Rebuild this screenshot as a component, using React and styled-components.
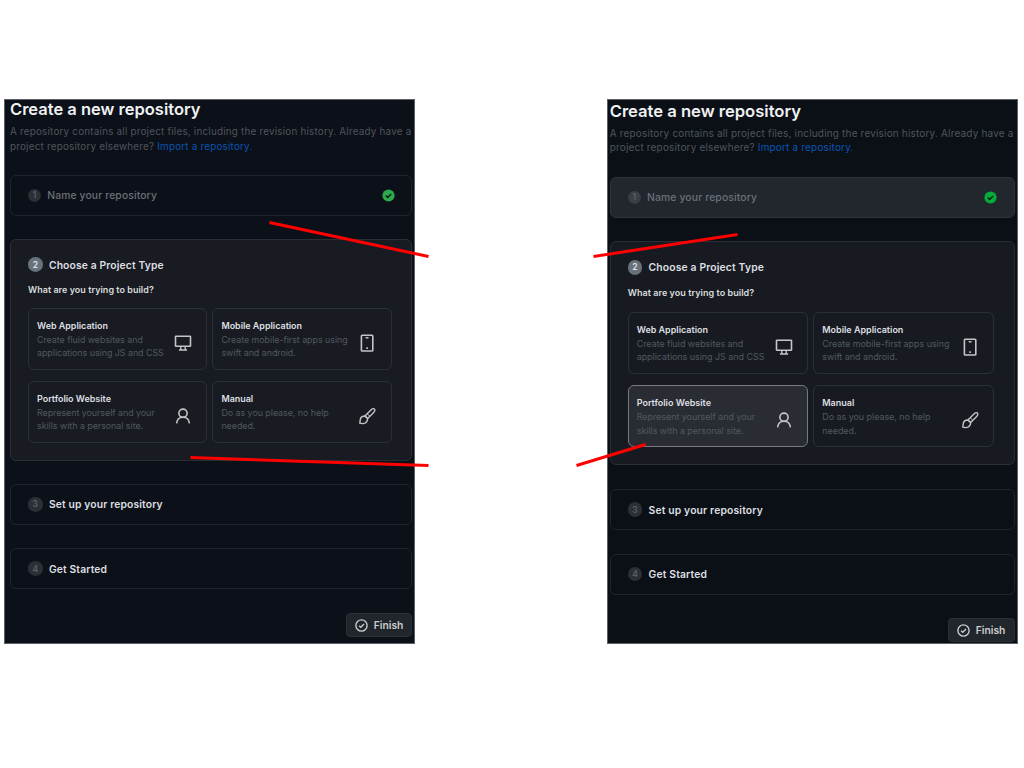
import React from "react";
import styled, { createGlobalStyle, ThemeProvider } from "styled-components";

const GlobalStyle = createGlobalStyle`
  * { box-sizing: border-box; }
  body { margin: 0; background: #fff; }
`;

const leftTheme = {
  bg: "#0c1018", activeBg: "#181b22", edge: "#5d6165",
  line: "#1f232a", activeLine: "#2a2f36", green: "#2bab4b",
  padTop: 1, padRight: 2, padLeft: 5,
  headGap: 21.2, rowHeight: 41, gap: 23.2, stageHeight: 222,
  inner: 17, cardGap: 5, cardRowGap: 11, cardWidth: 179.4, cardHeight: 62,
  titleTop: 17.5, questionTop: 12, cardsTop: 11.8, buttonTop: 24.2, buttonWidth: 66,
  scale: 1, iconRight: 15.5, checkRight: 17,
};

const rightTheme = {
  ...leftTheme,
  bg: "#0b1017", activeBg: "#171b21", green: "#04ad3a",
  padTop: 2.6, padRight: 2.5, padLeft: 1.7,
  headGap: 21.9, stageHeight: 224, gap: 23.6,
  cardWidth: 180.6, cardRowGap: 11.5, titleTop: 17.4, questionTop: 11.8, cardsTop: 13,
  scale: 1.005, iconRight: 15, checkRight: 18, buttonTop: 23.7, buttonWidth: 66.5,
};

const Page = styled.main`
  position: relative;
  width: 1024px;
  height: 768px;
  padding: 99px 6px 0 4px;
  display: flex;
  justify-content: space-between;
  overflow: hidden;
  font-family: Inter, "Liberation Sans", sans-serif;
`;

const Panel = styled.section`
  width: 411px;
  height: 545px;
  background: ${(p) => p.theme.bg};
  border: 1px solid ${(p) => p.theme.edge};
  padding: ${(p) => `${p.theme.padTop}px ${p.theme.padRight}px 0 ${p.theme.padLeft}px`};
  display: flex;
  flex-direction: column;
  overflow: hidden;
`;

const Heading = styled.h1`
  margin: 0;
  font-size: ${(p) => 16.5 * p.theme.scale}px;
  line-height: 17px;
  font-weight: 600;
  color: #f0f1f2;
  white-space: nowrap;
`;

const Intro = styled.p`
  margin: 6px 0 0;
  font-size: ${(p) => 9.9 * p.theme.scale}px;
  line-height: 14.7px;
  letter-spacing: 0.2px;
  color: #4f555d;
  white-space: nowrap;
`;

const Link = styled.a`
  color: #0955b2;
`;

const Steps = styled.div`
  margin-top: ${(p) => p.theme.headGap}px;
  display: flex;
  flex-direction: column;
  gap: ${(p) => p.theme.gap}px;
`;

const Step = styled.div`
  height: ${(p) => p.theme.rowHeight}px;
  border: 1px solid ${(p) => (p.$filled ? "#2f333a" : p.theme.line)};
  border-radius: 6px;
  background: ${(p) => (p.$filled ? "#22262d" : "transparent")};
  padding: 0 ${(p) => p.theme.checkRight - 1}px 0 ${(p) => p.theme.inner}px;
  display: flex;
  align-items: center;
`;

const Stage = styled.div`
  height: ${(p) => p.theme.stageHeight}px;
  border: 1px solid ${(p) => p.theme.activeLine};
  border-radius: 6px;
  background: ${(p) => p.theme.activeBg};
  padding: ${(p) => `${p.theme.titleTop}px 0 0 ${p.theme.inner}px`};
`;

const StepHead = styled.div`
  display: flex;
  align-items: center;
  height: 15px;
`;

const Badge = styled.span`
  flex: none;
  width: ${(p) => (p.$done ? 13 : 14.6)}px;
  height: ${(p) => (p.$done ? 13 : 14.6)}px;
  border-radius: 50%;
  display: flex;
  align-items: center;
  justify-content: center;
  font-size: 8.5px;
  font-weight: 600;
  color: ${(p) => (p.$active ? "#dfe2e5" : "#59616a")};
  background: ${(p) => (p.$active ? "#68717c" : p.$filled ? "#3a3e45" : "#2b2f36")};
`;

const StepLabel = styled.span`
  flex: 1;
  margin-left: 6.3px;
  font-size: ${(p) => 10.3 * p.theme.scale}px;
  font-weight: ${(p) => (p.$muted ? 500 : 600)};
  letter-spacing: 0.15px;
  color: ${(p) => (p.$muted ? "#6b7179" : "#dddfe1")};
  white-space: nowrap;
`;

const Question = styled.div`
  margin-top: ${(p) => p.theme.questionTop}px;
  height: 12px;
  font-size: ${(p) => 8.95 * p.theme.scale}px;
  line-height: 12px;
  font-weight: 600;
  letter-spacing: 0.06px;
  color: #d9dbdd;
`;

const Cards = styled.div`
  margin-top: ${(p) => p.theme.cardsTop}px;
  display: grid;
  grid-template-columns: repeat(2, ${(p) => p.theme.cardWidth}px);
  grid-auto-rows: ${(p) => p.theme.cardHeight}px;
  column-gap: ${(p) => p.theme.cardGap}px;
  row-gap: ${(p) => p.theme.cardRowGap}px;
`;

const Card = styled.div`
  border: 1px solid ${(p) => (p.$selected ? "#777b81" : "#2b3037")};
  border-radius: 6px;
  background: ${(p) => (p.$selected ? "#292d33" : "transparent")};
  padding: 10px ${(p) => p.theme.iconRight - 1}px 0 8px;
  display: flex;
  justify-content: space-between;
`;

const CardTitle = styled.div`
  font-size: ${(p) => 8.95 * p.theme.scale}px;
  line-height: 13px;
  font-weight: 600;
  color: #dddfe1;
  white-space: nowrap;
`;

const CardText = styled.div`
  margin-top: 1px;
  font-size: ${(p) => 8.9 * p.theme.scale}px;
  line-height: 13.4px;
  letter-spacing: -0.03px;
  color: #51585f;
  white-space: nowrap;
`;

const CardIcon = styled.svg`
  flex: none;
  width: 18px;
  height: 18px;
  margin-top: 15px;
  fill: none;
  stroke: #c3c5c7;
  stroke-width: 1.6;
`;

const FinishButton = styled.button`
  align-self: flex-end;
  flex: none;
  margin: ${(p) => p.theme.buttonTop}px 0 0;
  width: ${(p) => p.theme.buttonWidth}px;
  height: 24px;
  padding: 0 0 0 8px;
  display: flex;
  align-items: center;
  gap: 5.7px;
  border: 1px solid #2b2f36;
  border-radius: 4px;
  background: #21252c;
  color: #c9cbcd;
  font-family: inherit;
  font-size: 10.3px;
  font-weight: 600;
`;

const Pointers = styled.svg`
  position: absolute;
  inset: 0;
  pointer-events: none;
  stroke: #f00;
  stroke-width: 3;
`;

const icons = {
  web: (
    <>
      <rect x="1.5" y="2.2" width="15" height="10" rx="0.5" />
      <path d="M6.8 12.2v3.6M11.2 12.2v3.6M4.9 16h8.2" strokeWidth="1.4" />
    </>
  ),
  mobile: (
    <>
      <rect x="3.4" y="1.2" width="11.4" height="15.8" rx="0.8" />
      <path d="M7.7 3.7h2.8M8.3 14.1h1.6" />
    </>
  ),
  portfolio: (
    <>
      <circle cx="9" cy="6.2" r="4.1" />
      <path d="M2.6 16.3C3 12.7 5.4 10.3 9 10.3s6 2.4 6.4 6" />
    </>
  ),
  manual: (
    <>
      <path d="M6.9 9L13.5 2.4C14.8 1.2 17.3 1.4 16.8 3.6C16.5 4.9 12.2 9 9.6 11.4Z" strokeWidth="1.4" />
      <path d="M6.9 9C4.6 9.1 2.7 10 2.3 12.4L1.8 16.2C4.4 17 7.9 16.6 9 14.1C9.4 13.2 9.6 12.3 9.6 11.4Z" strokeWidth="1.4" />
      <path d="M9.2 6.8L11.9 9.3" strokeWidth="1" />
    </>
  ),
};

const projectTypes = [
  { icon: "web", title: "Web Application", lines: ["Create fluid websites and", "applications using JS and CSS"] },
  { icon: "mobile", title: "Mobile Application", lines: ["Create mobile-first apps using", "swift and android."] },
  { icon: "portfolio", title: "Portfolio Website", lines: ["Represent yourself and your", "skills with a personal site."] },
  { icon: "manual", title: "Manual", lines: ["Do as you please, no help", "needed."] },
];

const Check = styled.svg`
  flex: none;
  width: 13px;
  height: 13px;
  path { fill: none; stroke: #10221a; stroke-width: 1.5; }
  circle { fill: ${(p) => p.theme.green}; }
`;

function RepositoryPanel({ theme, hovered, selected }) {
  return (
    <ThemeProvider theme={theme}>
      <Panel>
        <Heading>Create a new repository</Heading>
        <Intro>
          A repository contains all project files, including the revision history. Already have a
          <br />
          project repository elsewhere? <Link>Import a repository.</Link>
        </Intro>
        <Steps>
          <Step $filled={hovered}>
            <Badge $done $filled={hovered}>1</Badge>
            <StepLabel $muted>Name your repository</StepLabel>
            <Check viewBox="0 0 13 13">
              <circle cx="6.5" cy="6.5" r="6.1" />
              <path d="M3.8 6.6l1.9 1.8 3.5-3.4" />
            </Check>
          </Step>
          <Stage>
            <StepHead>
              <Badge $active>2</Badge>
              <StepLabel>Choose a Project Type</StepLabel>
            </StepHead>
            <Question>What are you trying to build?</Question>
            <Cards>
              {projectTypes.map((t) => (
                <Card key={t.icon} $selected={selected === t.icon}>
                  <div>
                    <CardTitle>{t.title}</CardTitle>
                    <CardText>
                      {t.lines[0]}
                      <br />
                      {t.lines[1]}
                    </CardText>
                  </div>
                  <CardIcon viewBox="0 0 18 18">{icons[t.icon]}</CardIcon>
                </Card>
              ))}
            </Cards>
          </Stage>
          <Step>
            <Badge>3</Badge>
            <StepLabel>Set up your repository</StepLabel>
          </Step>
          <Step>
            <Badge>4</Badge>
            <StepLabel>Get Started</StepLabel>
          </Step>
        </Steps>
        <FinishButton>
          <svg width="13" height="13" viewBox="0 0 13 13" fill="none" stroke="#c9cbcd" strokeWidth="1.4">
            <circle cx="6.5" cy="6.5" r="5.6" />
            <path d="M4.1 6.7l1.7 1.6 3.2-3.2" />
          </svg>
          Finish
        </FinishButton>
      </Panel>
    </ThemeProvider>
  );
}

export default function App() {
  return (
    <>
      <GlobalStyle />
      <Page>
        <RepositoryPanel theme={leftTheme} />
        <RepositoryPanel theme={rightTheme} hovered selected="portfolio" />
        <Pointers width="1024" height="768" viewBox="0 0 1024 768">
          <path d="M269.5 222.5L428.5 256.5" />
          <path d="M190.5 457.5L428.5 465.5" />
          <path d="M593.5 256.5L737.5 234.5" />
          <path d="M576.5 465.5L645.5 444.5" />
        </Pointers>
      </Page>
    </>
  );
}
